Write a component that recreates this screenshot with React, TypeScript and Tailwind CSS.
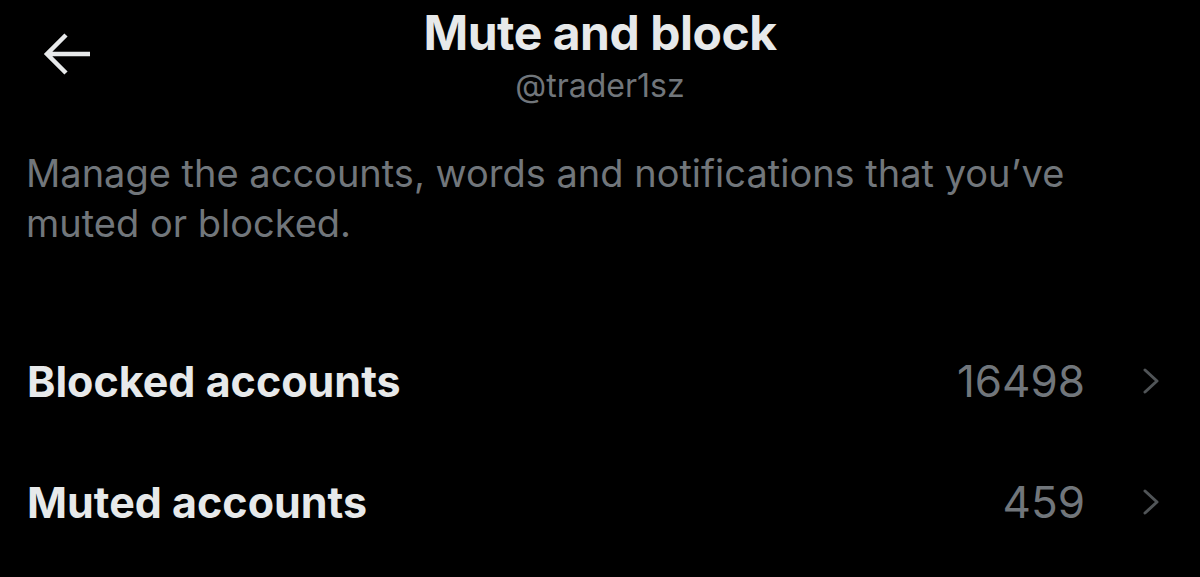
import React from 'react'

const rows = [
  { label: 'Blocked accounts', count: '16498' },
  { label: 'Muted accounts', count: '459' },
]

function BackArrow() {
  return (
    <svg width="50" height="44" viewBox="0 0 50 44" fill="none" className="text-[#e7e9ea]">
      <path d="M24 3 L5 22 L24 41 M5 22 H48" stroke="currentColor" strokeWidth="4.5" strokeLinecap="butt" strokeLinejoin="miter" />
    </svg>
  )
}

function Chevron() {
  return (
    <svg width="20" height="26" viewBox="0 0 20 26" fill="none" className="text-[#505457]">
      <path d="M4 2 L16 13 L4 24" stroke="currentColor" strokeWidth="3" strokeLinecap="round" strokeLinejoin="round" />
    </svg>
  )
}

export default function App() {
  return (
    <div className="h-[577px] w-[1200px] overflow-hidden bg-black font-['Inter','Liberation_Sans',sans-serif] text-[#e7e9ea]">
      <header className="relative pt-[5px]">
        <button className="absolute left-[42px] top-[32px]">
          <BackArrow />
        </button>
        <h1 className="text-center text-[48px] font-bold leading-[56px] tracking-[-0.01em]">Mute and block</h1>
        <p className="mt-[7px] text-center text-[32px] leading-[36px] text-[#71767b]">@trader1sz</p>
      </header>

      <p className="mt-[44px] pl-[26px] pr-[100px] text-[38px] leading-[50px] text-[#71767b]">
        Manage the accounts, words and notifications that you’ve muted or blocked.
      </p>

      <ul className="mt-[72px]">
        {rows.map((r) => (
          <li key={r.label} className="flex h-[121px] items-center justify-between pl-[27px] pr-[39px]">
            <span className="text-[43px] font-bold leading-[48px]">{r.label}</span>
            <span className="flex items-center gap-[56px]">
              <span className="text-[44px] leading-[48px] text-[#71767b]">{r.count}</span>
              <Chevron />
            </span>
          </li>
        ))}
      </ul>
    </div>
  )
}
